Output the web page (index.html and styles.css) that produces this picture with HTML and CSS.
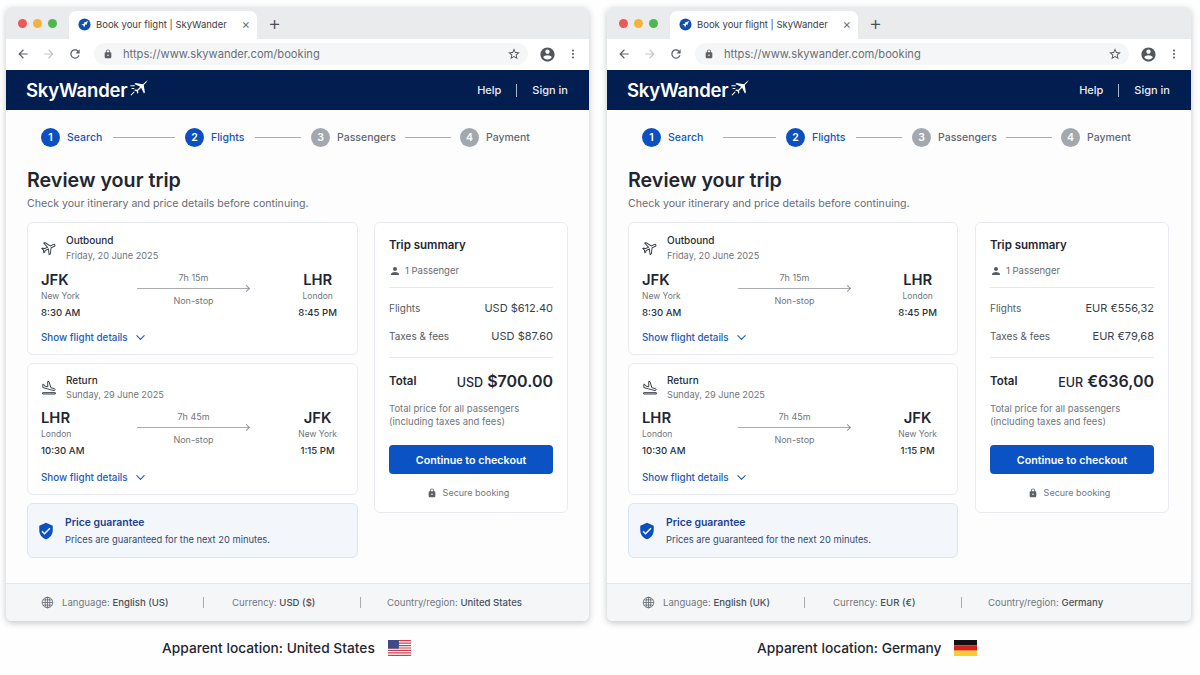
FILE: index.html
```html
<!DOCTYPE html>
<html>
<head>
<meta charset="utf-8"/>
<title>Book your flight | SkyWander</title>
<link rel="stylesheet" href="styles.css">
</head>
<body>

<svg class="sprite" xmlns="http://www.w3.org/2000/svg">
  <symbol id="i-back" viewBox="0 0 24 24"><path d="M20 11H7.83l5.59-5.59L12 4l-8 8 8 8 1.41-1.41L7.83 13H20v-2z"/></symbol>
  <symbol id="i-forward" viewBox="0 0 24 24"><path d="M12 4l-1.41 1.41L16.17 11H4v2h12.17l-5.58 5.59L12 20l8-8z"/></symbol>
  <symbol id="i-reload" viewBox="0 0 24 24"><path d="M17.65 6.35C16.2 4.9 14.21 4 12 4c-4.42 0-7.99 3.58-7.99 8s3.57 8 7.99 8c3.73 0 6.84-2.55 7.73-6h-2.08c-.82 2.33-3.04 4-5.65 4-3.31 0-6-2.69-6-6s2.69-6 6-6c1.66 0 3.14.69 4.22 1.78L13 11h7V4l-2.35 2.35z"/></symbol>
  <symbol id="i-lock" viewBox="0 0 24 24"><path d="M18 8h-1V6c0-2.76-2.24-5-5-5S7 3.24 7 6v2H6c-1.1 0-2 .9-2 2v10c0 1.1.9 2 2 2h12c1.1 0 2-.9 2-2V10c0-1.1-.9-2-2-2zm-6 9c-1.1 0-2-.9-2-2s.9-2 2-2 2 .9 2 2-.9 2-2 2zm3.1-9H8.9V6c0-1.71 1.39-3.1 3.1-3.1 1.71 0 3.1 1.39 3.1 3.1v2z"/></symbol>
  <symbol id="i-star" viewBox="0 0 24 24"><path d="M22 9.24l-7.19-.62L12 2 9.19 8.63 2 9.24l5.46 4.73L5.82 21 12 17.27 18.18 21l-1.63-7.03L22 9.24zM12 15.4l-3.76 2.27 1-4.28-3.32-2.88 4.38-.38L12 6.1l1.71 4.04 4.38.38-3.32 2.88 1 4.28L12 15.4z"/></symbol>
  <symbol id="i-account" viewBox="0 0 24 24"><path d="M12 2C6.48 2 2 6.48 2 12s4.48 10 10 10 10-4.48 10-10S17.52 2 12 2zm0 3c1.66 0 3 1.34 3 3s-1.34 3-3 3-3-1.34-3-3 1.34-3 3-3zm0 14.2c-2.5 0-4.71-1.28-6-3.22.03-1.99 4-3.08 6-3.08 1.99 0 5.97 1.09 6 3.08-1.29 1.94-3.5 3.22-6 3.22z"/></symbol>
  <symbol id="i-dots" viewBox="0 0 24 24"><circle cx="12" cy="5" r="2"/><circle cx="12" cy="12" r="2"/><circle cx="12" cy="19" r="2"/></symbol>
  <symbol id="i-plane" viewBox="0 0 24 24"><path d="M21 16v-2l-8-5V3.5c0-.83-.67-1.5-1.5-1.5S10 2.67 10 3.500V9l-8 5v2l8-2.500V19l-2 1.500V22l3.500-1 3.500 1v-1.500L13 19v-5.500l8 2.500z"/></symbol>
  <symbol id="i-logo" viewBox="0 0 24 20"><path d="M23 1.200c-.7-.8-2-.7-3 .1l-3.600 3.200-9.500-1.400-1.300 1.200 7.300 3.500-3.700 3.900-2.900-.3-1 1 3 1.200 1.200 3 1-1-.3-2.900 3.900-3.700 3.500 7.300 1.200-1.300-1.400-9.500 3.400-3.400c.9-1 .9-2.100.2-2.900z"/><path d="M1 6.500h4.500M2.500 10H5M1.500 18l3.500-3.500" fill="none" stroke="currentColor" stroke-width="1.300" stroke-linecap="round"/></symbol>
  <symbol id="i-land" viewBox="0 0 24 24"><path d="M2.500 19h19v2h-19v-2zm7.180-5.730l4.350 1.160 5.310 1.420c.8.210 1.620-.26 1.840-1.060.21-.8-.26-1.620-1.060-1.840l-5.310-1.420-2.760-9.020L10.120 2v8.280L5.150 8.950l-.93-2.320-1.450-.39v5.170l1.600.43 5.310 1.430z"/></symbol>
  <symbol id="i-person" viewBox="0 0 24 24"><path d="M12 12c2.210 0 4-1.790 4-4s-1.790-4-4-4-4 1.790-4 4 1.790 4 4 4zm0 2c-2.670 0-8 1.340-8 4v2h16v-2c0-2.660-5.330-4-8-4z"/></symbol>
  <symbol id="i-shield" viewBox="0 0 24 24"><path d="M12 1L3 5v6c0 5.550 3.840 10.740 9 12 5.160-1.260 9-6.450 9-12V5l-9-4zm-2 16l-4-4 1.410-1.410L10 14.170l6.590-6.580L18 9l-8 8z"/></symbol>
  <symbol id="i-chevron" viewBox="0 0 12 12"><path d="M2 4l4 4 4-4" fill="none" stroke="currentColor" stroke-width="1.200" stroke-linecap="round" stroke-linejoin="round"/></symbol>
  <symbol id="i-globe" viewBox="0 0 14 14"><g fill="none" stroke="currentColor" stroke-width=".9"><circle cx="7" cy="7" r="5.700"/><ellipse cx="7" cy="7" rx="2.500" ry="5.700"/><path d="M7 1.300v11.400M1.300 7h11.400M2 4.200h10M2 9.800h10"/></g></symbol>
  <symbol id="i-favicon" viewBox="0 0 14 14"><circle cx="7" cy="7" r="6.500" fill="#0f4fb0"/><path d="M10.800 3.200L8.900 7.500l-.9-.9-1.500 3.600-.7-2.300-2.300-.7 3.300-1.300-.6-.8z" fill="#fff"/></symbol>
</svg>

<div class="windows">

  <div class="window">
    <div class="tabbar">
      <div class="lights"><span class="light red"></span><span class="light amber"></span><span class="light green"></span></div>
      <div class="tab">
        <svg class="favicon"><use href="#i-favicon"/></svg>
        <span class="tab-title">Book your flight | SkyWander</span>
        <span class="tab-close">&times;</span>
      </div>
      <span class="tab-new">+</span>
    </div>
    <div class="toolbar">
      <svg class="tool"><use href="#i-back"/></svg>
      <svg class="tool faded"><use href="#i-forward"/></svg>
      <svg class="tool"><use href="#i-reload"/></svg>
      <div class="omnibox">
        <svg class="omni-lock"><use href="#i-lock"/></svg>
        <span class="url">https://www.skywander.com/booking</span>
        <svg class="omni-star"><use href="#i-star"/></svg>
      </div>
      <svg class="avatar"><use href="#i-account"/></svg>
      <svg class="menu-dots"><use href="#i-dots"/></svg>
    </div>
    <div class="site-header">
      <div class="logo">SkyWander<svg class="logo-plane"><use href="#i-logo"/></svg></div>
      <div class="site-nav"><span>Help</span><span class="nav-sep"></span><span>Sign in</span></div>
    </div>
    <div class="content">
      <div class="steps">
        <span class="step-num">1</span><span class="step-label active first">Search</span><span class="step-line first-line"></span>
        <span class="step-num">2</span><span class="step-label active second">Flights</span><span class="step-line second-line"></span>
        <span class="step-num todo">3</span><span class="step-label third">Passengers</span><span class="step-line third-line"></span>
        <span class="step-num todo">4</span><span class="step-label">Payment</span>
      </div>
      <h1>Review your trip</h1>
      <p class="lead">Check your itinerary and price details before continuing.</p>
      <div class="columns">
        <div class="left-col">
          <div class="card flight">
            <div class="flight-head">
              <svg class="flight-icon outbound"><use href="#i-plane"/></svg>
              <div><div class="flight-kind">Outbound</div><div class="flight-date">Friday, 20 June 2025</div></div>
            </div>
            <div class="route">
              <div class="place"><div class="code">JFK</div><div class="city">New York</div><div class="time">8:30 AM</div></div>
              <div class="leg"><div class="leg-text">7h 15m</div><div class="leg-arrow"></div><div class="leg-text">Non-stop</div></div>
              <div class="place end"><div class="code">LHR</div><div class="city">London</div><div class="time">8:45 PM</div></div>
            </div>
            <div class="details">Show flight details<svg class="chevron"><use href="#i-chevron"/></svg></div>
          </div>
          <div class="card flight return">
            <div class="flight-head">
              <svg class="flight-icon"><use href="#i-land"/></svg>
              <div><div class="flight-kind">Return</div><div class="flight-date">Sunday, 29 June 2025</div></div>
            </div>
            <div class="route">
              <div class="place"><div class="code">LHR</div><div class="city">London</div><div class="time">10:30 AM</div></div>
              <div class="leg"><div class="leg-text">7h 45m</div><div class="leg-arrow"></div><div class="leg-text">Non-stop</div></div>
              <div class="place end"><div class="code">JFK</div><div class="city">New York</div><div class="time">1:15 PM</div></div>
            </div>
            <div class="details">Show flight details<svg class="chevron"><use href="#i-chevron"/></svg></div>
          </div>
          <div class="guarantee">
            <svg class="shield"><use href="#i-shield"/></svg>
            <div><div class="guarantee-title">Price guarantee</div><div class="guarantee-text">Prices are guaranteed for the next 20 minutes.</div></div>
          </div>
        </div>
        <div class="card summary">
          <div class="summary-title">Trip summary</div>
          <div class="passengers"><svg class="person"><use href="#i-person"/></svg>1 Passenger</div>
          <div class="price-rows">
            <div class="price-row"><span>Flights</span><span class="amount">USD $612.40</span></div>
            <div class="price-row"><span>Taxes &amp; fees</span><span class="amount">USD $87.60</span></div>
          </div>
          <div class="total-row"><span class="total-label">Total</span><span class="total-amount"><span class="total-cur">USD</span> $700.00</span></div>
          <p class="total-note">Total price for all passengers<br>(including taxes and fees)</p>
          <div class="checkout">Continue to checkout</div>
          <div class="secure"><svg class="secure-lock"><use href="#i-lock"/></svg>Secure booking</div>
        </div>
      </div>
    </div>
    <div class="site-footer">
      <svg class="globe"><use href="#i-globe"/></svg>
      <span class="foot-item foot-lang">Language: <b>English (US)</b></span><span class="foot-sep"></span>
      <span class="foot-item foot-cur">Currency: <b>USD ($)</b></span><span class="foot-sep"></span>
      <span class="foot-item foot-region">Country/region: <b>United States</b></span>
    </div>
  </div>

  <div class="window">
    <div class="tabbar">
      <div class="lights"><span class="light red"></span><span class="light amber"></span><span class="light green"></span></div>
      <div class="tab">
        <svg class="favicon"><use href="#i-favicon"/></svg>
        <span class="tab-title">Book your flight | SkyWander</span>
        <span class="tab-close">&times;</span>
      </div>
      <span class="tab-new">+</span>
    </div>
    <div class="toolbar">
      <svg class="tool"><use href="#i-back"/></svg>
      <svg class="tool faded"><use href="#i-forward"/></svg>
      <svg class="tool"><use href="#i-reload"/></svg>
      <div class="omnibox">
        <svg class="omni-lock"><use href="#i-lock"/></svg>
        <span class="url">https://www.skywander.com/booking</span>
        <svg class="omni-star"><use href="#i-star"/></svg>
      </div>
      <svg class="avatar"><use href="#i-account"/></svg>
      <svg class="menu-dots"><use href="#i-dots"/></svg>
    </div>
    <div class="site-header">
      <div class="logo">SkyWander<svg class="logo-plane"><use href="#i-logo"/></svg></div>
      <div class="site-nav"><span>Help</span><span class="nav-sep"></span><span>Sign in</span></div>
    </div>
    <div class="content">
      <div class="steps">
        <span class="step-num">1</span><span class="step-label active first">Search</span><span class="step-line first-line short"></span>
        <span class="step-num">2</span><span class="step-label active second">Flights</span><span class="step-line second-line"></span>
        <span class="step-num todo">3</span><span class="step-label third">Passengers</span><span class="step-line third-line"></span>
        <span class="step-num todo">4</span><span class="step-label">Payment</span>
      </div>
      <h1>Review your trip</h1>
      <p class="lead">Check your itinerary and price details before continuing.</p>
      <div class="columns">
        <div class="left-col">
          <div class="card flight">
            <div class="flight-head">
              <svg class="flight-icon outbound"><use href="#i-plane"/></svg>
              <div><div class="flight-kind">Outbound</div><div class="flight-date">Friday, 20 June 2025</div></div>
            </div>
            <div class="route">
              <div class="place"><div class="code">JFK</div><div class="city">New York</div><div class="time">8:30 AM</div></div>
              <div class="leg"><div class="leg-text">7h 15m</div><div class="leg-arrow"></div><div class="leg-text">Non-stop</div></div>
              <div class="place end"><div class="code">LHR</div><div class="city">London</div><div class="time">8:45 PM</div></div>
            </div>
            <div class="details">Show flight details<svg class="chevron"><use href="#i-chevron"/></svg></div>
          </div>
          <div class="card flight return">
            <div class="flight-head">
              <svg class="flight-icon"><use href="#i-land"/></svg>
              <div><div class="flight-kind">Return</div><div class="flight-date">Sunday, 29 June 2025</div></div>
            </div>
            <div class="route">
              <div class="place"><div class="code">LHR</div><div class="city">London</div><div class="time">10:30 AM</div></div>
              <div class="leg"><div class="leg-text">7h 45m</div><div class="leg-arrow"></div><div class="leg-text">Non-stop</div></div>
              <div class="place end"><div class="code">JFK</div><div class="city">New York</div><div class="time">1:15 PM</div></div>
            </div>
            <div class="details">Show flight details<svg class="chevron"><use href="#i-chevron"/></svg></div>
          </div>
          <div class="guarantee">
            <svg class="shield"><use href="#i-shield"/></svg>
            <div><div class="guarantee-title">Price guarantee</div><div class="guarantee-text">Prices are guaranteed for the next 20 minutes.</div></div>
          </div>
        </div>
        <div class="card summary">
          <div class="summary-title">Trip summary</div>
          <div class="passengers"><svg class="person"><use href="#i-person"/></svg>1 Passenger</div>
          <div class="price-rows">
            <div class="price-row"><span>Flights</span><span class="amount">EUR €556,32</span></div>
            <div class="price-row"><span>Taxes &amp; fees</span><span class="amount">EUR €79,68</span></div>
          </div>
          <div class="total-row"><span class="total-label">Total</span><span class="total-amount"><span class="total-cur">EUR</span> €636,00</span></div>
          <p class="total-note">Total price for all passengers<br>(including taxes and fees)</p>
          <div class="checkout">Continue to checkout</div>
          <div class="secure"><svg class="secure-lock"><use href="#i-lock"/></svg>Secure booking</div>
        </div>
      </div>
    </div>
    <div class="site-footer">
      <svg class="globe"><use href="#i-globe"/></svg>
      <span class="foot-item foot-lang">Language: <b>English (UK)</b></span><span class="foot-sep"></span>
      <span class="foot-item foot-cur">Currency: <b>EUR (€)</b></span><span class="foot-sep"></span>
      <span class="foot-item foot-region">Country/region: <b>Germany</b></span>
    </div>
  </div>

</div>

<div class="captions">
  <div class="caption caption-us">
    <span>Apparent location: United States</span>
    <svg class="flag" viewBox="0 0 19 13" preserveAspectRatio="none">
      <rect width="19" height="13" fill="#fff"/>
      <path d="M0 0h19v1H0zM0 2h19v1H0zM0 4h19v1H0zM0 6h19v1H0zM0 8h19v1H0zM0 10h19v1H0zM0 12h19v1H0z" fill="#c9404f"/>
      <rect width="9" height="7" fill="#3f4a86"/>
    </svg>
  </div>
  <div class="caption caption-de">
    <span>Apparent location: Germany</span>
    <svg class="flag" viewBox="0 0 3 3" preserveAspectRatio="none">
      <rect width="3" height="1" fill="#111"/>
      <rect y="1" width="3" height="1" fill="#d8211c"/>
      <rect y="2" width="3" height="1" fill="#fbcc2d"/>
    </svg>
  </div>
</div>

</body>
</html>
```

FILE: styles.css
```css
html, body {
   margin: 0;
   height: 100%;
   overflow: hidden;
}

body {
   font-family: Inter, "Liberation Sans", sans-serif;
   background-color: #fefefe;
   color: #1f2733;
}

h1, p {
   margin: 0;
}

.sprite {
   display: none;
}

.windows {
   display: flex;
   gap: 18px;
   padding: 7px 0 0 6px;
}

.window {
   width: 583px;
   flex: none;
   height: 614px;
   display: flex;
   flex-direction: column;
   border-radius: 6px;
   overflow: hidden;
   background: #fdfdfe;
   box-shadow: 0 2px 6px rgba(40, 50, 70, 0.28);
}

.window + .window {
   width: 584px;
}

/* browser chrome */

.tabbar {
   height: 32px;
   flex: none;
   display: flex;
   align-items: flex-end;
   background: #e9ebed;
}

.lights {
   display: flex;
   gap: 6px;
   margin: 0 12px 11px 12px;
   align-self: flex-end;
}

.light {
   width: 9px;
   height: 9px;
   border-radius: 50%;
}

.red { background: #ec5a57; }
.amber { background: #f2b33c; }
.green { background: #4cb84f; }

.tab {
   width: 188px;
   height: 28px;
   display: flex;
   align-items: center;
   padding: 0 9px 2px;
   box-sizing: border-box;
   background: #fff;
   border-radius: 7px 7px 0 0;
}

.favicon {
   width: 13px;
   height: 13px;
   flex: none;
}

.tab-title {
   margin-left: 5px;
   font-size: 9.5px;
   color: #3c4147;
   white-space: nowrap;
}

.tab-close {
   margin-left: auto;
   margin-right: -2px;
   font-size: 13px;
   color: #70757a;
}

.tab-new {
   margin: 0 0 6px 11px;
   font-size: 20px;
   line-height: 20px;
   font-weight: 300;
   color: #4a4f55;
}

.toolbar {
   height: 31px;
   flex: none;
   display: flex;
   align-items: center;
   box-sizing: border-box;
   background: #fff;
   padding: 0 0 1px 10px;
}

.tool {
   width: 14px;
   height: 14px;
   margin-right: 12px;
   fill: #5c6167;
}

.tool.faded {
   fill: #c3c6ca;
}

.omnibox {
   width: 434px;
   height: 22px;
   flex: none;
   display: flex;
   align-items: center;
   padding: 0 7px 0 9px;
   box-sizing: border-box;
   border-radius: 11px;
   background: #f5f6f7;
}

.omni-lock {
   width: 10px;
   height: 10px;
   fill: #5c6167;
}

.url {
   margin-left: 10px;
   font-size: 11.15px;
   color: #6a6f75;
}

.omni-star {
   width: 14px;
   height: 14px;
   margin-left: auto;
   fill: #55595f;
}

.avatar {
   width: 17px;
   height: 17px;
   margin-left: 11px;
   fill: #53575c;
}

.menu-dots {
   width: 12px;
   height: 12px;
   margin-left: 11px;
   fill: #53575c;
}

/* site header */

.site-header {
   height: 40px;
   flex: none;
   display: flex;
   align-items: center;
   justify-content: space-between;
   padding: 0 21px 0 20px;
   background: #021e50;
   color: #fff;
}

.logo {
   display: flex;
   align-items: center;
   font-size: 18.5px;
   font-weight: 600;
   letter-spacing: -0.2px;
}

.logo-plane {
   width: 19px;
   height: 17px;
   margin-left: 3px;
   margin-top: -3px;
   fill: currentColor;
   color: #fff;
}

.site-nav {
   display: flex;
   align-items: center;
   font-size: 11px;
   font-weight: 500;
   color: #e9edf5;
}

.nav-sep {
   width: 1px;
   height: 13px;
   margin: 0 15px;
   background: #aab6cc;
}

/* content */

.content {
   flex: 1;
   padding: 0 21px;
   min-height: 0;
}

.steps {
   display: flex;
   align-items: center;
   height: 20px;
   margin-top: 17px;
   padding-left: 14px;
   font-size: 10.5px;
   font-weight: 500;
   color: #5f6670;
}

.step-num {
   width: 19px;
   height: 19px;
   flex: none;
   border-radius: 50%;
   display: flex;
   align-items: center;
   justify-content: center;
   background: #0b4fc0;
   color: #fff;
   font-size: 10.5px;
   font-weight: 600;
}

.step-num.todo {
   background: #a3a7ae;
}

.step-label {
   margin-left: 7px;
   white-space: nowrap;
}

.step-label.first { width: 35px; }
.step-label.second { width: 34px; }
.step-label.third { width: 58px; }

.step-label.active {
   color: #1555b8;
}

.step-line {
   height: 1px;
   flex: none;
   background: #a9adb3;
}

.first-line { width: 62px; margin: 0 10px 0 11px; }
.first-line.short { width: 53px; margin-left: 20px; }
.second-line { width: 46px; margin: 0 10px; }
.third-line { width: 46px; margin: 0 9px 0 10px; }

h1 {
   margin-top: 20px;
   font-size: 19.7px;
   line-height: 26px;
   font-weight: 600;
   color: #1f2733;
}

.lead {
   margin-top: 3px;
   font-size: 10.6px;
   line-height: 16px;
   color: #666c74;
}

.columns {
   display: flex;
   align-items: flex-start;
   gap: 16px;
   margin-top: 10px;
}

.window + .window .columns {
   gap: 17px;
}

.left-col {
   width: 331px;
   display: flex;
   flex-direction: column;
   gap: 8px;
}

.window + .window .left-col {
   width: 330px;
}

.card {
   box-sizing: border-box;
   border: 1px solid #e8ebef;
   border-radius: 6px;
   background: #fff;
}

.flight {
   height: 133px;
   padding: 10px 20px 0 13px;
}

.flight.return {
   height: 132px;
   padding-top: 9px;
}

.flight-head {
   display: flex;
   align-items: center;
}

.flight-icon {
   width: 16px;
   height: 16px;
   margin-right: 9px;
   flex: none;
   fill: none;
   stroke: #3a4048;
   stroke-width: 1.5;
}

.flight-icon.outbound {
   transform: rotate(65deg);
}

.flight-kind {
   font-size: 10px;
   line-height: 15px;
   font-weight: 500;
   color: #262d37;
}

.flight-date {
   font-size: 9.2px;
   line-height: 15px;
   color: #6f757c;
}

.return .flight-date {
   line-height: 14px;
}

.route {
   display: flex;
   margin-top: 7px;
}

.return .route {
   margin-top: 6px;
}

.place {
   width: 96px;
   flex: none;
}

.place.end {
   width: auto;
   margin-left: auto;
   text-align: center;
}

.code {
   font-size: 14.8px;
   line-height: 20px;
   font-weight: 600;
   color: #1f2733;
}

.city {
   font-size: 8.5px;
   line-height: 12px;
   color: #6f757c;
}

.time {
   margin-top: 3px;
   font-size: 9.6px;
   line-height: 16px;
   font-weight: 500;
   color: #2a313b;
}

.leg {
   width: 113px;
   flex: none;
   padding-top: 1px;
   text-align: center;
}

.return .leg {
   padding-top: 2px;
}

.leg-text {
   font-size: 9px;
   line-height: 13px;
   color: #70767d;
}

.leg-arrow {
   position: relative;
   height: 1px;
   margin: 4px 1px 5px 0;
   background: #a9adb3;
}

.leg-arrow::after {
   content: "";
   position: absolute;
   right: 0;
   top: -2.500px;
   width: 5px;
   height: 5px;
   box-sizing: border-box;
   border-top: 1px solid #8d9298;
   border-right: 1px solid #8d9298;
   transform: rotate(45deg);
}

.details {
   display: flex;
   align-items: center;
   margin-top: 9px;
   font-size: 9.85px;
   line-height: 14px;
   font-weight: 500;
   color: #1d5cb5;
}

.return .details {
   margin-top: 11px;
}

.chevron {
   width: 11px;
   height: 11px;
   margin-left: 7px;
}

.guarantee {
   height: 55px;
   display: flex;
   align-items: center;
   box-sizing: border-box;
   padding-left: 9px;
   border: 1px solid #d9e5f1;
   border-radius: 6px;
   background: #f3f7fb;
}

.shield {
   width: 18px;
   height: 20px;
   margin-right: 10px;
   flex: none;
   fill: #0b4fc0;
}

.guarantee-title {
   font-size: 10.4px;
   line-height: 16px;
   font-weight: 600;
   color: #1c4191;
}

.guarantee-text {
   margin-top: 2px;
   font-size: 9.35px;
   line-height: 14px;
   color: #34496f;
}

/* summary */

.summary {
   width: 194px;
   height: 291px;
   padding: 14px 14px 0 14px;
}

.summary-title {
   font-size: 11.500px;
   line-height: 17px;
   font-weight: 600;
   color: #1f2733;
}

.passengers {
   display: flex;
   align-items: center;
   margin-top: 10px;
   padding-bottom: 9px;
   border-bottom: 1px solid #e6e8eb;
   font-size: 9.500px;
   line-height: 14px;
   color: #666c74;
}

.person {
   width: 12px;
   height: 12px;
   margin-right: 4px;
   fill: #565c64;
}

.price-rows {
   display: flex;
   flex-direction: column;
   gap: 12px;
   padding: 12px 0 13px;
   border-bottom: 1px solid #e6e8eb;
}

.price-row {
   display: flex;
   align-items: center;
   justify-content: space-between;
   font-size: 10px;
   line-height: 16px;
   color: #565c64;
}

.amount {
   font-size: 11px;
   color: #3a414b;
}

.total-row {
   display: flex;
   align-items: center;
   justify-content: space-between;
   margin-top: 12px;
   height: 22px;
}

.total-label {
   font-size: 11.500px;
   font-weight: 600;
}

.total-amount {
   font-size: 16px;
   font-weight: 600;
   color: #1f2733;
}

.total-cur {
   font-size: 12.500px;
   font-weight: 500;
}

.total-note {
   margin-top: 10px;
   font-size: 9.500px;
   line-height: 13px;
   color: #70767d;
}

.checkout {
   height: 29px;
   margin-top: 17px;
   padding-top: 1px;
   box-sizing: border-box;
   display: flex;
   align-items: center;
   justify-content: center;
   border-radius: 4px;
   background: #0b53c4;
   color: #fff;
   font-size: 10.700px;
   font-weight: 600;
}

.secure {
   display: flex;
   align-items: center;
   justify-content: center;
   margin-top: 12px;
   padding-right: 6px;
   font-size: 9px;
   line-height: 14px;
   color: #70767d;
}

.secure-lock {
   width: 10px;
   height: 10px;
   margin-right: 6px;
   fill: #5c6167;
}

/* footer of the site */

.site-footer {
   height: 38px;
   flex: none;
   display: flex;
   align-items: center;
   box-sizing: border-box;
   padding-left: 35px;
   border-top: 1px solid #e6e8eb;
   background: #f5f6f8;
   font-size: 9.600px;
   color: #72787f;
}

.site-footer b {
   font-weight: 500;
   color: #4a5058;
}

.globe {
   width: 13px;
   height: 13px;
   margin-right: 8px;
   flex: none;
   color: #666c74;
}

.foot-item {
   white-space: nowrap;
}

.foot-lang { width: 141px; }
.foot-cur { width: 128px; margin-left: 28px; }
.foot-region { margin-left: 26px; }

.foot-sep {
   width: 1px;
   height: 11px;
   flex: none;
   background: #a9adb3;
}

/* captions */

.captions {
   display: flex;
   gap: 18px;
   padding: 19px 0 0 6px;
}

.caption {
   width: 583px;
   flex: none;
   box-sizing: border-box;
   height: 16px;
   display: flex;
   align-items: center;
   gap: 13px;
   font-size: 13.750px;
   font-weight: 500;
   color: #1f2733;
}

.caption-us { padding-left: 156px; }
.caption-de { padding-left: 150px; }

.flag {
   width: 23px;
   height: 16px;
   flex: none;
}
```
